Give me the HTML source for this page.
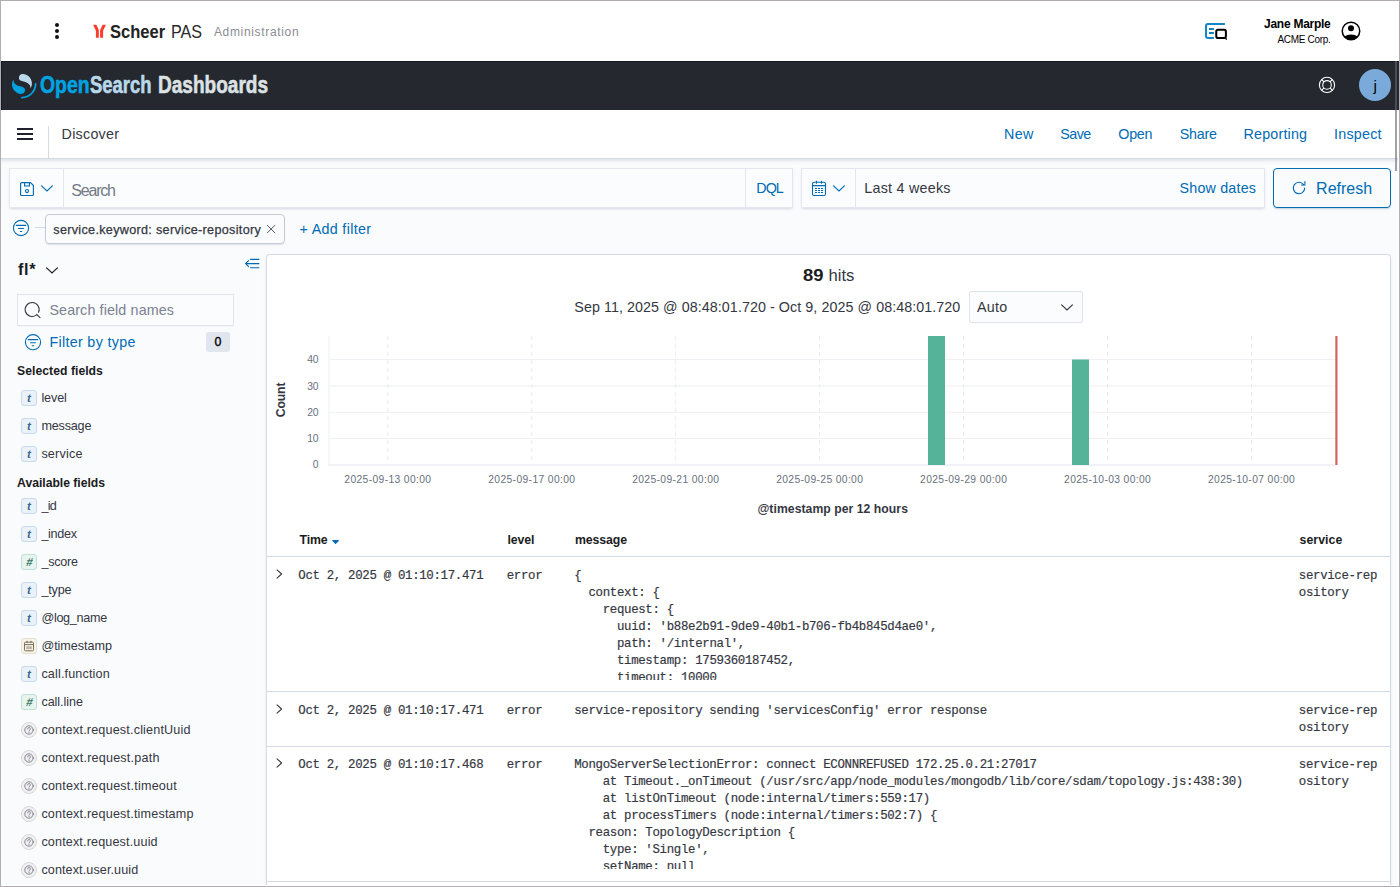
<!DOCTYPE html>
<html lang="en"><head><meta charset="utf-8"><title>Discover - OpenSearch Dashboards</title>
<style>
html,body{margin:0;padding:0}
html{width:1400px;height:887px;overflow:hidden}
body{width:1400px;height:887px;overflow:hidden;position:relative;background:#fafbfd;
 font-family:"Liberation Sans",sans-serif;color:#343741}
.t{position:absolute;line-height:1;white-space:pre}
.a{position:absolute}
svg{position:absolute;overflow:visible}
</style></head>
<body>
<div class="a" style="left:0;top:0;width:1400px;height:61px;background:#fff"></div>
<div class="a" style="left:1px;top:61px;width:1398px;height:49px;background:#25282f;box-shadow:inset 1px 1px 0 #161a24"></div>
<div class="a" style="left:0;top:110px;width:1400px;height:48px;background:#fff;border-bottom:1px solid #d3dae6;box-shadow:0 2px 3px rgba(152,162,179,.25)"></div>
<svg style="left:0;top:0" width="1400" height="61" viewBox="0 0 1400 61"><circle cx="57" cy="25" r="2" fill="#111"/><circle cx="57" cy="31" r="2" fill="#111"/><circle cx="57" cy="37" r="2" fill="#111"/><path d="M93.1 24.7H96.4L98.8 29.9V37.7H95.9V30.7Z" fill="#ff3b2c"/><path d="M105.9 24.7H102.6L100.1 29.9V37.7H103.1V30.7Z" fill="#ff3b2c"/><path d="M1224.9 23.9H1208a2 2 0 0 0-2 2v10.1a2 2 0 0 0 2 2h5.9" fill="none" stroke="#1386c8" stroke-width="2"/><path d="M1209 29h4.9M1209 33h4.9" stroke="#0b7fc2" stroke-width="2"/><rect x="1216.25" y="29.85" width="9.65" height="8.15" rx="1.8" fill="none" stroke="#000" stroke-width="2"/><path d="M1224.2 38.2h2.7v2.1z" fill="#000"/><clipPath id="acc"><circle cx="1351" cy="31" r="8.8"/></clipPath><circle cx="1351" cy="31" r="8.75" fill="none" stroke="#000" stroke-width="1.5"/><circle cx="1351" cy="28.3" r="3" fill="#000"/><ellipse cx="1351" cy="41.2" rx="9.5" ry="6.6" fill="#000" clip-path="url(#acc)"/></svg>
<span class="t" style='left:110.10px;top:23px;font-size:18px;color:#222;font-weight:700;transform:scaleX(0.9193);transform-origin:0 0;'>Scheer</span>
<span class="t" style='left:170.90px;top:23px;font-size:18px;color:#2a2a2a;transform:scaleX(0.8966);transform-origin:0 0;'>PAS</span>
<span class="t" style='left:213.90px;top:26px;font-size:12px;color:#8c8c92;letter-spacing:0.667px;'>Administration</span>
<span class="t" style='left:1264.00px;top:18px;font-size:12px;color:#000;font-weight:700;letter-spacing:-0.258px;'>Jane Marple</span>
<span class="t" style='left:1277.40px;top:35px;font-size:10px;color:#000;letter-spacing:-0.303px;'>ACME Corp.</span>
<svg style="left:11.6px;top:74.2px" width="24.5" height="24.5" viewBox="0 0 64 64"><path d="M61.7374 23.5C60.4878 23.5 59.4748 24.513 59.4748 25.7626C59.4748 44.3813 44.3813 59.4748 25.7626 59.4748C24.513 59.4748 23.5 60.4878 23.5 61.7374C23.5 62.987 24.513 64 25.7626 64C46.8805 64 64 46.8805 64 25.7626C64 24.513 62.987 23.5 61.7374 23.5Z" fill="#00a3e0"/><path d="M48.0814 38C50.2572 34.4505 52.3615 29.7178 51.9475 23.0921C51.0899 9.36725 38.6589 -1.04463 26.9206 0.0837327C22.3253 0.525465 17.6068 4.2712 18.026 10.9805C18.2082 13.8961 19.6352 15.6169 21.9544 16.9399C24.1618 18.1992 26.9978 18.9969 30.2128 19.9011C34.0962 20.9934 38.6009 22.2203 42.063 24.7717C46.2125 27.8295 49.0491 31.3743 48.0814 38Z" fill="#b9d9eb"/><path d="M3.91861 14C1.74276 17.5495 -0.361506 22.2822 0.0524931 28.9079C0.910072 42.6327 13.3411 53.0446 25.0794 51.9163C29.6747 51.4745 34.3932 47.7288 33.974 41.0195C33.7918 38.1039 32.3648 36.3831 30.0456 35.0601C27.8382 33.8008 25.0022 33.0031 21.7872 32.0989C17.9038 31.0066 13.3991 29.7797 9.93694 27.2283C5.78746 24.1705 2.95092 20.6257 3.91861 14Z" fill="#00a3e0"/></svg>
<span class="t" style='left:40.00px;top:73px;font-size:24px;color:#00a3e0;font-weight:700;transform:scaleX(0.8086);transform-origin:0 0;-webkit-text-stroke:0.6px;'>Open</span>
<span class="t" style='left:90.40px;top:73px;font-size:24px;color:#b9d9eb;font-weight:700;transform:scaleX(0.7694);transform-origin:0 0;-webkit-text-stroke:0.6px;'>Search</span>
<span class="t" style='left:158.00px;top:73px;font-size:24px;color:#dde2e4;font-weight:700;transform:scaleX(0.7931);transform-origin:0 0;-webkit-text-stroke:0.6px;'>Dashboards</span>
<svg style="left:1317px;top:75px" width="20" height="20" viewBox="0 0 20 20" fill="none" stroke="#fff" stroke-width="1.1"><circle cx="10" cy="9.9" r="7.6"/><circle cx="10" cy="9.9" r="4.3"/><path d="M4.6 4.5l2.4 2.4M15.4 4.5l-2.4 2.4M4.6 15.3l2.4-2.4M15.4 15.3l-2.4-2.4"/></svg>
<div class="a" style="left:1359px;top:69px;width:32px;height:32px;border-radius:50%;background:#79aad9"></div>
<span class="t" style='left:1373.49px;top:78px;font-size:15.4px;color:#000;'>j</span>
<div class="a" style="left:17px;top:128px;width:16px;height:2px;background:#1f222a;box-shadow:0 5px 0 #1f222a,0 10px 0 #1f222a"></div>
<div class="a" style="left:48px;top:126px;width:1px;height:32px;background:#d3dae6"></div>
<span class="t" style='left:61.60px;top:127px;font-size:14.3px;color:#343741;letter-spacing:0.254px;'>Discover</span>
<span class="t" style='left:1004.00px;top:127px;font-size:14.3px;color:#006bb4;letter-spacing:0.345px;'>New</span>
<span class="t" style='left:1060.30px;top:127px;font-size:14.3px;color:#006bb4;letter-spacing:-0.531px;'>Save</span>
<span class="t" style='left:1118.30px;top:127px;font-size:14.3px;color:#006bb4;letter-spacing:-0.261px;'>Open</span>
<span class="t" style='left:1179.70px;top:127px;font-size:14.3px;color:#006bb4;letter-spacing:-0.214px;'>Share</span>
<span class="t" style='left:1243.60px;top:127px;font-size:14.3px;color:#006bb4;letter-spacing:0.175px;'>Reporting</span>
<span class="t" style='left:1334.00px;top:127px;font-size:14.3px;color:#006bb4;letter-spacing:0.232px;'>Inspect</span>
<div class="a" style="left:9px;top:168px;width:782px;height:38px;background:#fbfcfd;border:1px solid #e3e6ee;box-shadow:0 2px 2px -1px rgba(152,162,179,.3),0 1px 4px -2px rgba(152,162,179,.3)"></div>
<div class="a" style="left:63px;top:169px;width:1px;height:38px;background:#e3e6ee"></div>
<div class="a" style="left:745px;top:169px;width:1px;height:38px;background:#e3e6ee"></div>
<svg style="left:19px;top:181px" width="16" height="16" viewBox="0 0 16 16" fill="none" stroke="#006bb4" stroke-width="1.15"><path d="M2.6 1.6h8.9l2.9 2.9v9a1 1 0 0 1-1 1H2.6a1 1 0 0 1-1-1V2.6a1 1 0 0 1 1-1z" stroke-linejoin="round"/><path d="M5.6 1.6v3.4h4.8V1.6"/><circle cx="8" cy="10" r="1.55"/></svg>
<svg style="left:41px;top:185px" width="12" height="8" viewBox="0 0 12 8" fill="none" stroke="#006bb4" stroke-width="1.2" stroke-linecap="round"><path d="M0.6 0.9L6 5.9 11.4 0.9"/></svg>
<span class="t" style='left:71.30px;top:183px;font-size:16px;color:#717886;letter-spacing:-1.201px;'>Search</span>
<span class="t" style='left:756.30px;top:181px;font-size:14.3px;color:#006bb4;letter-spacing:-0.953px;'>DQL</span>
<div class="a" style="left:801px;top:168px;width:462px;height:38px;background:#fbfcfd;border:1px solid #e3e6ee;box-shadow:0 2px 2px -1px rgba(152,162,179,.3),0 1px 4px -2px rgba(152,162,179,.3)"></div>
<div class="a" style="left:855px;top:169px;width:1px;height:38px;background:#e3e6ee"></div>
<svg style="left:811px;top:180px" width="16" height="17" viewBox="0 0 16 17" fill="none" stroke="#006bb4" stroke-width="1.1"><rect x="1.5" y="2.3" width="13" height="13.2" rx="1.6"/><path d="M1.5 5.6h13M5.5 0.8v3M10.5 0.8v3"/><path d="M4 8.5h2M7 8.5h2M10 8.5h2M4 10.5h2M7 10.5h2M10 10.5h2M4 12.5h2M7 12.5h2M10 12.5h2" stroke-width="1"/></svg>
<svg style="left:833px;top:184.5px" width="12" height="8" viewBox="0 0 12 8" fill="none" stroke="#006bb4" stroke-width="1.2" stroke-linecap="round"><path d="M0.6 0.9L6 5.9 11.4 0.9"/></svg>
<span class="t" style='left:864.30px;top:181px;font-size:14.3px;color:#343741;letter-spacing:0.250px;'>Last 4 weeks</span>
<span class="t" style='left:1179.50px;top:181px;font-size:14.3px;color:#006bb4;letter-spacing:0.198px;'>Show dates</span>
<div class="a" style="left:1273px;top:168px;width:116px;height:38px;border:1px solid #006bb4;border-radius:4px;background:#fafbfd;box-shadow:0 2px 2px -1px rgba(54,97,126,.3)"></div>
<svg style="left:1291px;top:180px" width="16" height="16" viewBox="0 0 16 16" fill="none" stroke="#006bb4" stroke-width="1.1" stroke-linecap="round"><path d="M12.6 4.6A5.7 5.7 0 1 0 13.7 8"/><path d="M13.9 1.6v3.4h-3.4"/></svg>
<span class="t" style='left:1316.10px;top:181px;font-size:16px;color:#006bb4;letter-spacing:-0.005px;'>Refresh</span>
<svg style="left:12px;top:219px" width="18" height="18" viewBox="0 0 18 18" fill="none" stroke="#006bb4" stroke-width="1.1" stroke-linecap="round"><circle cx="9" cy="9" r="7.6"/><path d="M4.3 6.4h9.4M6.5 9.5h5M8.3 12.5h1.4"/></svg>
<div class="a" style="left:35px;top:227px;width:10px;height:1px;background:#d3dae6"></div>
<div class="a" style="left:45px;top:214px;width:238px;height:28px;border:1px solid #c3cad5;border-radius:4px;background:#fbfcfd;box-shadow:0 2px 2px -1px rgba(152,162,179,.3)"></div>
<span class="t" style='left:53.30px;top:224px;font-size:12.6px;color:#343741;letter-spacing:0.318px;-webkit-text-stroke:0.25px #343741;'>service.keyword: service-repository</span>
<svg style="left:266px;top:224px" width="10" height="10" viewBox="0 0 10 10" stroke="#4a4d57" stroke-width="0.95" stroke-linecap="round"><path d="M1.4 1.4l7.4 7.4M8.8 1.4l-7.4 7.4"/></svg>
<span class="t" style='left:299.50px;top:222px;font-size:14.3px;color:#006bb4;letter-spacing:0.322px;'>+ Add filter</span>
<span class="t" style='left:18.00px;top:261px;font-size:16.2px;color:#1a1c21;font-weight:700;letter-spacing:0.706px;'>fl*</span>
<svg style="left:46px;top:266.5px" width="12" height="8" viewBox="0 0 12 8" fill="none" stroke="#1a1c21" stroke-width="1.2" stroke-linecap="round"><path d="M0.6 0.9L6 5.9 11.4 0.9"/></svg>
<svg style="left:244px;top:258px" width="16" height="12" viewBox="0 0 16 12" fill="none" stroke="#006bb4" stroke-width="1.1" stroke-linecap="round"><path d="M6.5 1.4h8.4M1.6 5.6h13.3M6.5 9.8h8.4M4.6 2.6L1.6 5.6l3 3"/></svg>
<div class="a" style="left:17px;top:294px;width:215px;height:30px;border:1px solid #dfe3ec;background:#fbfcfd;box-shadow:0 1px 1px -1px rgba(152,162,179,.3)"></div>
<svg style="left:24px;top:301px" width="18" height="18" viewBox="0 0 18 18" fill="none" stroke="#343741" stroke-width="1.1" stroke-linecap="round"><path d="M12.6 13.9A7 7 0 1 1 14.6 11.2M12.7 13.4l3.3 3.2"/></svg>
<span class="t" style='left:49.40px;top:303px;font-size:14.3px;color:#7a8190;letter-spacing:0.130px;'>Search field names</span>
<svg style="left:24px;top:333px" width="18" height="18" viewBox="0 0 18 18" fill="none" stroke="#006bb4" stroke-width="1.1" stroke-linecap="round"><circle cx="9" cy="9.2" r="7.6"/><path d="M4.3 6.6h9.4M6.5 9.7h5M8.3 12.7h1.4"/></svg>
<span class="t" style='left:49.40px;top:335px;font-size:14.3px;color:#006bb4;letter-spacing:0.320px;'>Filter by type</span>
<div class="a" style="left:206px;top:332px;width:24px;height:20px;border-radius:3px;background:#e0e5ee"></div>
<span class="t" style='left:214.55px;top:336px;font-size:12.4px;color:#000;-webkit-text-stroke:0.35px;'>0</span>
<span class="t" style='left:17.10px;top:365px;font-size:12.2px;color:#1a1c21;font-weight:700;letter-spacing:0.031px;'>Selected fields</span>
<span class="t" style='left:17.10px;top:477px;font-size:12.2px;color:#1a1c21;font-weight:700;letter-spacing:-0.026px;'>Available fields</span>
<div class="a" style="left:21px;top:390px;width:14px;height:14px;border:1px solid #c8dbee;border-radius:3px;background:#eaf1f8"></div>
<span class="t" style='left:26.96px;top:392px;font-size:11.6px;color:#3f6a92;font-weight:700;font-style:italic;'>t</span>
<span class="t" style='left:41.40px;top:392px;font-size:12.6px;color:#343741;letter-spacing:-0.102px;'>level</span>
<div class="a" style="left:21px;top:418px;width:14px;height:14px;border:1px solid #c8dbee;border-radius:3px;background:#eaf1f8"></div>
<span class="t" style='left:26.96px;top:420px;font-size:11.6px;color:#3f6a92;font-weight:700;font-style:italic;'>t</span>
<span class="t" style='left:41.40px;top:420px;font-size:12.6px;color:#343741;letter-spacing:-0.185px;'>message</span>
<div class="a" style="left:21px;top:446px;width:14px;height:14px;border:1px solid #c8dbee;border-radius:3px;background:#eaf1f8"></div>
<span class="t" style='left:26.96px;top:448px;font-size:11.6px;color:#3f6a92;font-weight:700;font-style:italic;'>t</span>
<span class="t" style='left:41.40px;top:448px;font-size:12.6px;color:#343741;letter-spacing:0.185px;'>service</span>
<div class="a" style="left:21px;top:498px;width:14px;height:14px;border:1px solid #c8dbee;border-radius:3px;background:#eaf1f8"></div>
<span class="t" style='left:26.96px;top:500px;font-size:11.6px;color:#3f6a92;font-weight:700;font-style:italic;'>t</span>
<span class="t" style='left:41.40px;top:500px;font-size:12.6px;color:#343741;letter-spacing:-0.756px;'>_id</span>
<div class="a" style="left:21px;top:526px;width:14px;height:14px;border:1px solid #c8dbee;border-radius:3px;background:#eaf1f8"></div>
<span class="t" style='left:26.96px;top:528px;font-size:11.6px;color:#3f6a92;font-weight:700;font-style:italic;'>t</span>
<span class="t" style='left:41.40px;top:528px;font-size:12.6px;color:#343741;letter-spacing:-0.285px;'>_index</span>
<div class="a" style="left:21px;top:554px;width:14px;height:14px;border:1px solid #bfe0d3;border-radius:3px;background:#e8f4ef"></div>
<span class="t" style='left:26.10px;top:557px;font-size:11.5px;color:#3a7a66;font-weight:700;font-style:italic;transform:skewX(-10deg);'>#</span>
<span class="t" style='left:41.40px;top:556px;font-size:12.6px;color:#343741;letter-spacing:-0.262px;'>_score</span>
<div class="a" style="left:21px;top:582px;width:14px;height:14px;border:1px solid #c8dbee;border-radius:3px;background:#eaf1f8"></div>
<span class="t" style='left:26.96px;top:584px;font-size:11.6px;color:#3f6a92;font-weight:700;font-style:italic;'>t</span>
<span class="t" style='left:41.40px;top:584px;font-size:12.6px;color:#343741;letter-spacing:-0.153px;'>_type</span>
<div class="a" style="left:21px;top:610px;width:14px;height:14px;border:1px solid #c8dbee;border-radius:3px;background:#eaf1f8"></div>
<span class="t" style='left:26.96px;top:612px;font-size:11.6px;color:#3f6a92;font-weight:700;font-style:italic;'>t</span>
<span class="t" style='left:41.40px;top:612px;font-size:12.6px;color:#343741;letter-spacing:-0.289px;'>@log_name</span>
<div class="a" style="left:21px;top:638px;width:14px;height:14px;border:1px solid #e7e0d0;border-radius:3px;background:#f6f2ea"></div>
<svg style="left:23px;top:640px" width="12" height="12" viewBox="0 0 12 12" fill="none" stroke="#7a6e55" stroke-width="1"><rect x="1.5" y="2.2" width="9" height="8.6" rx="1"/><path d="M1.5 4.6h9M4 0.8v2.2M8 0.8v2.2"/><path d="M4.1 6.3v2.8M6 6.3v2.8M7.9 6.3v2.8" stroke-width="0.9"/></svg>
<span class="t" style='left:41.40px;top:640px;font-size:12.6px;color:#343741;letter-spacing:-0.042px;'>@timestamp</span>
<div class="a" style="left:21px;top:666px;width:14px;height:14px;border:1px solid #c8dbee;border-radius:3px;background:#eaf1f8"></div>
<span class="t" style='left:26.96px;top:668px;font-size:11.6px;color:#3f6a92;font-weight:700;font-style:italic;'>t</span>
<span class="t" style='left:41.40px;top:668px;font-size:12.6px;color:#343741;letter-spacing:0.149px;'>call.function</span>
<div class="a" style="left:21px;top:694px;width:14px;height:14px;border:1px solid #bfe0d3;border-radius:3px;background:#e8f4ef"></div>
<span class="t" style='left:26.10px;top:697px;font-size:11.5px;color:#3a7a66;font-weight:700;font-style:italic;transform:skewX(-10deg);'>#</span>
<span class="t" style='left:41.40px;top:696px;font-size:12.6px;color:#343741;letter-spacing:-0.050px;'>call.line</span>
<div class="a" style="left:21px;top:722px;width:14px;height:14px;border:1px solid #d6d6db;border-radius:50%;background:#f1f1f3"></div>
<svg style="left:24px;top:725px" width="10" height="10" viewBox="0 0 10 10" fill="none" stroke="#6a6b74" stroke-width="0.8" stroke-linecap="round"><circle cx="5" cy="5" r="4.2"/><path d="M3.6 3.9a1.4 1.4 0 1 1 2 1.3c-.4.2-.6.5-.6.9M5 7.4v.1"/></svg>
<span class="t" style='left:41.40px;top:724px;font-size:12.6px;color:#343741;letter-spacing:0.167px;'>context.request.clientUuid</span>
<div class="a" style="left:21px;top:750px;width:14px;height:14px;border:1px solid #d6d6db;border-radius:50%;background:#f1f1f3"></div>
<svg style="left:24px;top:753px" width="10" height="10" viewBox="0 0 10 10" fill="none" stroke="#6a6b74" stroke-width="0.8" stroke-linecap="round"><circle cx="5" cy="5" r="4.2"/><path d="M3.6 3.9a1.4 1.4 0 1 1 2 1.3c-.4.2-.6.5-.6.9M5 7.4v.1"/></svg>
<span class="t" style='left:41.40px;top:752px;font-size:12.6px;color:#343741;letter-spacing:0.204px;'>context.request.path</span>
<div class="a" style="left:21px;top:778px;width:14px;height:14px;border:1px solid #d6d6db;border-radius:50%;background:#f1f1f3"></div>
<svg style="left:24px;top:781px" width="10" height="10" viewBox="0 0 10 10" fill="none" stroke="#6a6b74" stroke-width="0.8" stroke-linecap="round"><circle cx="5" cy="5" r="4.2"/><path d="M3.6 3.9a1.4 1.4 0 1 1 2 1.3c-.4.2-.6.5-.6.9M5 7.4v.1"/></svg>
<span class="t" style='left:41.40px;top:780px;font-size:12.6px;color:#343741;letter-spacing:0.204px;'>context.request.timeout</span>
<div class="a" style="left:21px;top:806px;width:14px;height:14px;border:1px solid #d6d6db;border-radius:50%;background:#f1f1f3"></div>
<svg style="left:24px;top:809px" width="10" height="10" viewBox="0 0 10 10" fill="none" stroke="#6a6b74" stroke-width="0.8" stroke-linecap="round"><circle cx="5" cy="5" r="4.2"/><path d="M3.6 3.9a1.4 1.4 0 1 1 2 1.3c-.4.2-.6.5-.6.9M5 7.4v.1"/></svg>
<span class="t" style='left:41.40px;top:808px;font-size:12.6px;color:#343741;letter-spacing:0.183px;'>context.request.timestamp</span>
<div class="a" style="left:21px;top:834px;width:14px;height:14px;border:1px solid #d6d6db;border-radius:50%;background:#f1f1f3"></div>
<svg style="left:24px;top:837px" width="10" height="10" viewBox="0 0 10 10" fill="none" stroke="#6a6b74" stroke-width="0.8" stroke-linecap="round"><circle cx="5" cy="5" r="4.2"/><path d="M3.6 3.9a1.4 1.4 0 1 1 2 1.3c-.4.2-.6.5-.6.9M5 7.4v.1"/></svg>
<span class="t" style='left:41.40px;top:836px;font-size:12.6px;color:#343741;letter-spacing:0.146px;'>context.request.uuid</span>
<div class="a" style="left:21px;top:862px;width:14px;height:14px;border:1px solid #d6d6db;border-radius:50%;background:#f1f1f3"></div>
<svg style="left:24px;top:865px" width="10" height="10" viewBox="0 0 10 10" fill="none" stroke="#6a6b74" stroke-width="0.8" stroke-linecap="round"><circle cx="5" cy="5" r="4.2"/><path d="M3.6 3.9a1.4 1.4 0 1 1 2 1.3c-.4.2-.6.5-.6.9M5 7.4v.1"/></svg>
<span class="t" style='left:41.40px;top:864px;font-size:12.6px;color:#343741;letter-spacing:0.099px;'>context.user.uuid</span>
<div class="a" style="left:266px;top:254px;width:1123px;height:632px;border:1px solid #d3dae6;border-bottom:0;border-radius:4px 4px 0 0;background:#fff;box-shadow:0 2px 2px -1px rgba(152,162,179,.3),0 1px 5px -2px rgba(152,162,179,.3)"></div>
<span class="t" style='left:802.70px;top:268px;font-size:16.6px;color:#1a1c21;font-weight:700;transform:scaleX(1.1100);transform-origin:0 0;'>89</span>
<span class="t" style='left:828.60px;top:268px;font-size:16.6px;color:#343741;letter-spacing:-0.043px;'>hits</span>
<span class="t" style='left:574.30px;top:300px;font-size:14.3px;color:#343741;letter-spacing:0.064px;'>Sep 11, 2025 @ 08:48:01.720 - Oct 9, 2025 @ 08:48:01.720</span>
<div class="a" style="left:969px;top:291px;width:112px;height:30px;border:1px solid #dfe3ec;border-radius:2px;background:#fbfcfd;box-shadow:0 1px 1px -1px rgba(152,162,179,.3)"></div>
<span class="t" style='left:977.10px;top:300px;font-size:14.3px;color:#343741;letter-spacing:0.226px;'>Auto</span>
<svg style="left:1061px;top:303.5px" width="12" height="8" viewBox="0 0 12 8" fill="none" stroke="#343741" stroke-width="1.2" stroke-linecap="round"><path d="M0.6 0.9L6 5.9 11.4 0.9"/></svg>
<svg style="left:266px;top:330px" width="1124" height="170" viewBox="266 330 1124 170"><rect x="329" y="359.0" width="1006.5" height="1" fill="#eef0f4"/><rect x="329" y="385.5" width="1006.5" height="1" fill="#eef0f4"/><rect x="329" y="411.8" width="1006.5" height="1" fill="#eef0f4"/><rect x="329" y="438.0" width="1006.5" height="1" fill="#eef0f4"/><line x1="387.80" y1="336" x2="387.80" y2="465" stroke="#e9ecf2" stroke-width="1" stroke-dasharray="4 4"/><line x1="531.75" y1="336" x2="531.75" y2="465" stroke="#e9ecf2" stroke-width="1" stroke-dasharray="4 4"/><line x1="675.70" y1="336" x2="675.70" y2="465" stroke="#e9ecf2" stroke-width="1" stroke-dasharray="4 4"/><line x1="819.65" y1="336" x2="819.65" y2="465" stroke="#e9ecf2" stroke-width="1" stroke-dasharray="4 4"/><line x1="963.60" y1="336" x2="963.60" y2="465" stroke="#e9ecf2" stroke-width="1" stroke-dasharray="4 4"/><line x1="1107.55" y1="336" x2="1107.55" y2="465" stroke="#e9ecf2" stroke-width="1" stroke-dasharray="4 4"/><line x1="1251.50" y1="336" x2="1251.50" y2="465" stroke="#e9ecf2" stroke-width="1" stroke-dasharray="4 4"/><rect x="328.5" y="336" width="1" height="129.5" fill="#eef0f4"/><rect x="328.5" y="464" width="1007" height="2" fill="#eff1f5"/><rect x="928" y="336" width="17" height="129" fill="#54b399"/><rect x="1072" y="359.5" width="17" height="105.5" fill="#54b399"/><rect x="1335.3" y="336" width="2.2" height="129" fill="#d8635d"/></svg>
<span class="t" style='left:307.13px;top:355px;font-size:10.3px;color:#69707d;'>40</span>
<span class="t" style='left:307.13px;top:382px;font-size:10.3px;color:#69707d;'>30</span>
<span class="t" style='left:307.13px;top:408px;font-size:10.3px;color:#69707d;'>20</span>
<span class="t" style='left:307.13px;top:434px;font-size:10.3px;color:#69707d;'>10</span>
<span class="t" style='left:312.87px;top:460px;font-size:10.3px;color:#69707d;'>0</span>
<span class="t" style='left:344.30px;top:475px;font-size:10.3px;color:#69707d;letter-spacing:0.366px;'>2025-09-13 00:00</span>
<span class="t" style='left:488.25px;top:475px;font-size:10.3px;color:#69707d;letter-spacing:0.366px;'>2025-09-17 00:00</span>
<span class="t" style='left:632.20px;top:475px;font-size:10.3px;color:#69707d;letter-spacing:0.366px;'>2025-09-21 00:00</span>
<span class="t" style='left:776.15px;top:475px;font-size:10.3px;color:#69707d;letter-spacing:0.366px;'>2025-09-25 00:00</span>
<span class="t" style='left:920.10px;top:475px;font-size:10.3px;color:#69707d;letter-spacing:0.366px;'>2025-09-29 00:00</span>
<span class="t" style='left:1064.05px;top:475px;font-size:10.3px;color:#69707d;letter-spacing:0.366px;'>2025-10-03 00:00</span>
<span class="t" style='left:1208.00px;top:475px;font-size:10.3px;color:#69707d;letter-spacing:0.366px;'>2025-10-07 00:00</span>
<span class="t" style='left:757.45px;top:503px;font-size:12.2px;color:#343741;font-weight:700;letter-spacing:0.051px;'>@timestamp per 12 hours</span>
<div class="a" style="left:281px;top:400px;width:0;height:0;transform:rotate(-90deg)"><span class="t" style='left:-17.3px;top:-6px;font-size:12.2px;font-weight:700;color:#343741;letter-spacing:-0.1px'>Count</span></div>
<span class="t" style='left:299.60px;top:534px;font-size:12.3px;color:#1a1c21;font-weight:700;letter-spacing:-0.195px;'>Time</span>
<svg style="left:332px;top:540.4px" width="7.2" height="4.2" viewBox="0 0 8 4" preserveAspectRatio="none"><path d="M0.9 0h6.2a.6.6 0 0 1 .45 1L4.5 3.7a.7.7 0 0 1-1 0L.45 1A.6.6 0 0 1 .9 0z" fill="#006bb4"/></svg>
<span class="t" style='left:507.50px;top:534px;font-size:12.3px;color:#1a1c21;font-weight:700;letter-spacing:-0.090px;'>level</span>
<span class="t" style='left:575.00px;top:534px;font-size:12.3px;color:#1a1c21;font-weight:700;letter-spacing:-0.107px;'>message</span>
<span class="t" style='left:1299.60px;top:534px;font-size:12.3px;color:#1a1c21;font-weight:700;letter-spacing:0.049px;'>service</span>
<div class="a" style="left:267px;top:556px;width:1123px;height:1px;background:#d3dae6"></div>
<div class="a" style="left:267px;top:691px;width:1123px;height:1px;background:#d3dae6"></div>
<div class="a" style="left:267px;top:746px;width:1123px;height:1px;background:#d3dae6"></div>
<div class="a" style="left:267px;top:881px;width:1123px;height:1px;background:#d3dae6"></div>
<svg style="left:276px;top:568.6px" width="7" height="10" viewBox="0 0 7 10" fill="none" stroke="#343741" stroke-width="1.05" stroke-linecap="round" stroke-linejoin="round"><path d="M1 0.8l4.6 4.2L1 9.2"/></svg>
<span class="t" style='left:298.30px;top:570px;font-size:12.4px;color:#343741;font-family:"Liberation Mono", monospace;letter-spacing:-0.321px;-webkit-text-stroke:0.18px;'>Oct 2, 2025 @ 01:10:17.471</span>
<span class="t" style='left:506.70px;top:570px;font-size:12.4px;color:#343741;font-family:"Liberation Mono", monospace;letter-spacing:-0.321px;-webkit-text-stroke:0.18px;'>error</span>
<span class="t" style='left:1298.80px;top:570px;font-size:12.4px;color:#343741;font-family:"Liberation Mono", monospace;letter-spacing:-0.321px;-webkit-text-stroke:0.18px;'>service-rep</span>
<span class="t" style='left:1298.80px;top:587px;font-size:12.4px;color:#343741;font-family:"Liberation Mono", monospace;letter-spacing:-0.321px;-webkit-text-stroke:0.18px;'>ository</span>
<div class="a" style="left:570px;top:560px;width:720px;height:120px;overflow:hidden">
<span class="t" style='left:4.20px;top:10px;font-size:12.4px;color:#343741;font-family:"Liberation Mono", monospace;letter-spacing:-0.321px;-webkit-text-stroke:0.18px;'>{</span>
<span class="t" style='left:18.44px;top:27px;font-size:12.4px;color:#343741;font-family:"Liberation Mono", monospace;letter-spacing:-0.321px;-webkit-text-stroke:0.18px;'>context: {</span>
<span class="t" style='left:32.68px;top:44px;font-size:12.4px;color:#343741;font-family:"Liberation Mono", monospace;letter-spacing:-0.321px;-webkit-text-stroke:0.18px;'>request: {</span>
<span class="t" style='left:46.92px;top:61px;font-size:12.4px;color:#343741;font-family:"Liberation Mono", monospace;letter-spacing:-0.321px;-webkit-text-stroke:0.18px;'>uuid: &#x27;b88e2b91-9de9-40b1-b706-fb4b845d4ae0&#x27;,</span>
<span class="t" style='left:46.92px;top:78px;font-size:12.4px;color:#343741;font-family:"Liberation Mono", monospace;letter-spacing:-0.321px;-webkit-text-stroke:0.18px;'>path: &#x27;/internal&#x27;,</span>
<span class="t" style='left:46.92px;top:95px;font-size:12.4px;color:#343741;font-family:"Liberation Mono", monospace;letter-spacing:-0.321px;-webkit-text-stroke:0.18px;'>timestamp: 1759360187452,</span>
<span class="t" style='left:46.92px;top:112px;font-size:12.4px;color:#343741;font-family:"Liberation Mono", monospace;letter-spacing:-0.321px;-webkit-text-stroke:0.18px;'>timeout: 10000</span>
</div>
<svg style="left:276px;top:703.6px" width="7" height="10" viewBox="0 0 7 10" fill="none" stroke="#343741" stroke-width="1.05" stroke-linecap="round" stroke-linejoin="round"><path d="M1 0.8l4.6 4.2L1 9.2"/></svg>
<span class="t" style='left:298.30px;top:705px;font-size:12.4px;color:#343741;font-family:"Liberation Mono", monospace;letter-spacing:-0.321px;-webkit-text-stroke:0.18px;'>Oct 2, 2025 @ 01:10:17.471</span>
<span class="t" style='left:506.70px;top:705px;font-size:12.4px;color:#343741;font-family:"Liberation Mono", monospace;letter-spacing:-0.321px;-webkit-text-stroke:0.18px;'>error</span>
<span class="t" style='left:1298.80px;top:705px;font-size:12.4px;color:#343741;font-family:"Liberation Mono", monospace;letter-spacing:-0.321px;-webkit-text-stroke:0.18px;'>service-rep</span>
<span class="t" style='left:1298.80px;top:722px;font-size:12.4px;color:#343741;font-family:"Liberation Mono", monospace;letter-spacing:-0.321px;-webkit-text-stroke:0.18px;'>ository</span>
<span class="t" style='left:574.20px;top:705px;font-size:12.4px;color:#343741;font-family:"Liberation Mono", monospace;letter-spacing:-0.321px;-webkit-text-stroke:0.18px;'>service-repository sending &#x27;servicesConfig&#x27; error response</span>
<svg style="left:276px;top:757.6px" width="7" height="10" viewBox="0 0 7 10" fill="none" stroke="#343741" stroke-width="1.05" stroke-linecap="round" stroke-linejoin="round"><path d="M1 0.8l4.6 4.2L1 9.2"/></svg>
<span class="t" style='left:298.30px;top:759px;font-size:12.4px;color:#343741;font-family:"Liberation Mono", monospace;letter-spacing:-0.321px;-webkit-text-stroke:0.18px;'>Oct 2, 2025 @ 01:10:17.468</span>
<span class="t" style='left:506.70px;top:759px;font-size:12.4px;color:#343741;font-family:"Liberation Mono", monospace;letter-spacing:-0.321px;-webkit-text-stroke:0.18px;'>error</span>
<span class="t" style='left:1298.80px;top:759px;font-size:12.4px;color:#343741;font-family:"Liberation Mono", monospace;letter-spacing:-0.321px;-webkit-text-stroke:0.18px;'>service-rep</span>
<span class="t" style='left:1298.80px;top:776px;font-size:12.4px;color:#343741;font-family:"Liberation Mono", monospace;letter-spacing:-0.321px;-webkit-text-stroke:0.18px;'>ository</span>
<div class="a" style="left:570px;top:750px;width:720px;height:119px;overflow:hidden">
<span class="t" style='left:4.20px;top:9px;font-size:12.4px;color:#343741;font-family:"Liberation Mono", monospace;letter-spacing:-0.321px;-webkit-text-stroke:0.18px;'>MongoServerSelectionError: connect ECONNREFUSED 172.25.0.21:27017</span>
<span class="t" style='left:32.68px;top:26px;font-size:12.4px;color:#343741;font-family:"Liberation Mono", monospace;letter-spacing:-0.321px;-webkit-text-stroke:0.18px;'>at Timeout._onTimeout (/usr/src/app/node_modules/mongodb/lib/core/sdam/topology.js:438:30)</span>
<span class="t" style='left:32.68px;top:43px;font-size:12.4px;color:#343741;font-family:"Liberation Mono", monospace;letter-spacing:-0.321px;-webkit-text-stroke:0.18px;'>at listOnTimeout (node:internal/timers:559:17)</span>
<span class="t" style='left:32.68px;top:60px;font-size:12.4px;color:#343741;font-family:"Liberation Mono", monospace;letter-spacing:-0.321px;-webkit-text-stroke:0.18px;'>at processTimers (node:internal/timers:502:7) {</span>
<span class="t" style='left:18.44px;top:77px;font-size:12.4px;color:#343741;font-family:"Liberation Mono", monospace;letter-spacing:-0.321px;-webkit-text-stroke:0.18px;'>reason: TopologyDescription {</span>
<span class="t" style='left:32.68px;top:94px;font-size:12.4px;color:#343741;font-family:"Liberation Mono", monospace;letter-spacing:-0.321px;-webkit-text-stroke:0.18px;'>type: &#x27;Single&#x27;,</span>
<span class="t" style='left:32.68px;top:111px;font-size:12.4px;color:#343741;font-family:"Liberation Mono", monospace;letter-spacing:-0.321px;-webkit-text-stroke:0.18px;'>setName: null</span>
</div>
<div class="a" style="left:1398px;top:158px;width:1px;height:728px;background:#fff"></div>
<div class="a" style="left:1px;top:885px;width:1398px;height:1px;background:#fff"></div>
<div class="a" style="left:1395px;top:61px;width:2.4px;height:110px;background:rgba(99,102,112,.6)"></div>
<div class="a" style="left:0;top:0;width:1398px;height:885px;border:1px solid #b2adb1;pointer-events:none"></div>
</body></html>
